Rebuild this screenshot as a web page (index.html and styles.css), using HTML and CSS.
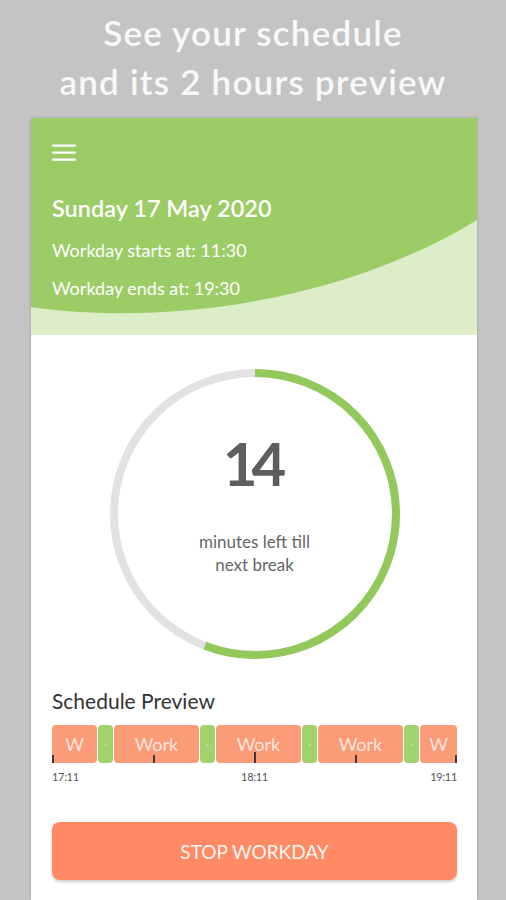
FILE: index.html
```html
<!DOCTYPE html>
<html lang="en">
<head>
  <meta charset="UTF-8" />
  <meta name="viewport" content="width=device-width, initial-scale=1.0"/>
  <title>Schedule preview</title>
  <link rel="stylesheet" href="styles.css">
</head>
<body>

<div class="promo">
  <div>See your schedule</div>
  <div>and its 2 hours preview</div>
</div>

<div class="screen">
  <div class="header">
    <svg class="wave" viewBox="0 0 446 217" preserveAspectRatio="none">
      <path d="M0 0 H446 V102 C310 185 130 208 0 189 Z" fill="#9ccc65"/>
    </svg>
    <svg class="menu" width="24" height="18" viewBox="0 0 24 18">
      <rect x="0" y="0.5" width="24" height="2.2" rx="1" fill="#fff"/>
      <rect x="0" y="7.5" width="24" height="2.2" rx="1" fill="#fff"/>
      <rect x="0" y="14.5" width="24" height="2.2" rx="1" fill="#fff"/>
    </svg>
    <div class="date">Sunday 17 May 2020</div>
    <div class="hours first">Workday starts at: 11:30</div>
    <div class="hours">Workday ends at: 19:30</div>
  </div>

  <div class="main">
    <div class="timer">
      <svg class="ring" width="290" height="290" viewBox="0 0 290 290">
        <circle cx="145" cy="145" r="141" fill="none" stroke="#e2e2e2" stroke-width="8"/>
        <circle cx="145" cy="145" r="141" fill="none" stroke="#93c85b" stroke-width="8"
                stroke-dasharray="494 900" transform="rotate(-90 145 145)"/>
      </svg>
      <div class="count">
        <div class="minutes">14</div>
        <div class="caption">minutes left till<br>next break</div>
      </div>
    </div>

    <div class="preview-title">Schedule Preview</div>
    <div class="timeline">
      <div class="seg work edge-first">W</div>
      <div class="seg brk">·</div>
      <div class="seg work wide">Work</div>
      <div class="seg brk">·</div>
      <div class="seg work wide">Work</div>
      <div class="seg brk">·</div>
      <div class="seg work wide">Work</div>
      <div class="seg brk">·</div>
      <div class="seg work edge-last">W</div>

      <span class="tick" style="left:0px"></span>
      <span class="tick" style="left:101px"></span>
      <span class="tick major" style="left:202px"></span>
      <span class="tick" style="left:303px"></span>
      <span class="tick" style="left:403px"></span>
    </div>
    <div class="labels">
      <span>17:11</span>
      <span>18:11</span>
      <span>19:11</span>
    </div>

    <button class="stop">STOP WORKDAY</button>
  </div>
</div>

</body>
</html>
```

FILE: styles.css
```css
body {
  margin: 0;
  background: #c4c4c4;
  font-family: 'Lato', 'Open Sans', sans-serif;
}

.promo {
  height: 118px;
  box-sizing: border-box;
  padding-top: 8px;
  text-align: center;
  color: #f8f8f8;
  font-size: 35px;
  font-weight: 600;
  line-height: 49px;
  letter-spacing: 1.2px;
}

.screen {
  width: 446px;
  margin-left: 31px;
  min-height: 782px;
  background: white;
  box-shadow: 0 0 3px rgba(0,0,0,0.2);
}

.header {
  position: relative;
  height: 217px;
  box-sizing: border-box;
  padding: 26px 21px 0;
  background: #dcedc8;
  color: #fff;
}

.wave {
  position: absolute;
  left: 0;
  top: 0;
  width: 100%;
  height: 100%;
}

.menu {
  position: relative;
  display: block;
}

.date {
  position: relative;
  margin-top: 31px;
  font-size: 23.5px;
  font-weight: 600;
  line-height: 30px;
}

.hours {
  position: relative;
  margin-top: 14px;
  font-size: 18px;
  line-height: 24px;
}

.hours.first {
  margin-top: 15px;
}

.main {
  padding: 0 20px 0 21px;
}

.timer {
  display: grid;
  justify-items: center;
  margin-top: 34px;
}

.ring,
.count {
  grid-area: 1 / 1;
}

.count {
  display: flex;
  flex-direction: column;
  align-items: center;
  padding-top: 64px;
  text-align: center;
}

.minutes {
  font-size: 60px;
  font-weight: 700;
  line-height: 60px;
  color: #5e5e5e;
  letter-spacing: -6px;
  margin-left: -6px;
}

.caption {
  margin-top: 37px;
  font-size: 17px;
  line-height: 23px;
  color: #666;
}

.preview-title {
  margin-top: 30px;
  font-size: 21px;
  line-height: 24px;
  color: #333;
}

.timeline {
  position: relative;
  display: flex;
  gap: 1px;
  height: 38px;
  margin-top: 12px;
}

.seg {
  display: flex;
  align-items: center;
  justify-content: center;
  border-radius: 4px;
  font-size: 18px;
  color: rgba(255,255,255,0.75);
}

.seg.work {
  background: #fb9b78;
}

.seg.wide {
  width: 85px;
}

.seg.edge-first {
  width: 45px;
}

.seg.edge-last {
  flex: 1;
}

.seg.brk {
  width: 15px;
  background: #a2d26c;
  color: rgba(255,255,255,0.5);
  font-size: 12px;
}

.tick {
  position: absolute;
  bottom: 0;
  width: 2px;
  height: 8px;
  background: #3a3a3a;
}

.tick.major {
  height: 11px;
}

.labels {
  display: flex;
  justify-content: space-between;
  margin-top: 7px;
  font-size: 11px;
  line-height: 14px;
  letter-spacing: -0.3px;
  color: #555;
}

.stop {
  display: flex;
  align-items: center;
  justify-content: center;
  width: 100%;
  height: 58px;
  margin-top: 38px;
  border: none;
  border-radius: 8px;
  background: #ff8a65;
  box-shadow: 0 2px 3px rgba(0,0,0,0.2);
  color: #fff6f2;
  font-family: inherit;
  font-size: 19px;
  cursor: pointer;
}
```
